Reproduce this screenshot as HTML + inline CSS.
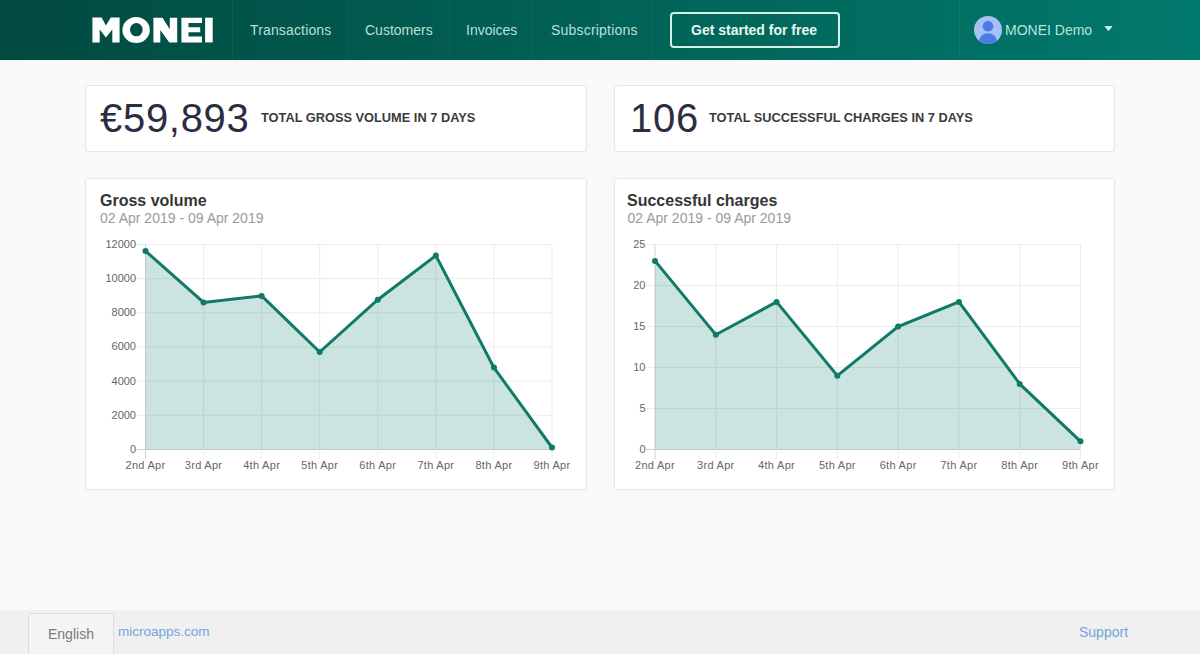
<!DOCTYPE html>
<html><head><meta charset="utf-8">
<style>
*{box-sizing:border-box;margin:0;padding:0}
html,body{width:1200px;height:654px;overflow:hidden;background:#f9f9f9;font-family:"Liberation Sans",sans-serif;position:relative}
.a{position:absolute;white-space:nowrap;line-height:1}
#nav{position:absolute;left:0;top:0;width:1200px;height:60px;background:linear-gradient(90deg,#024a40 0%,#01796c 100%)}
.sep{position:absolute;top:0;width:1px;height:60px;background:rgba(255,255,255,0.05)}
.nl{font-size:14px;color:rgba(215,245,237,0.88)}
.card{position:absolute;background:#fff;border:1px solid #e6e6e6;border-radius:3px}
.stat{font-size:40px;color:#2b2d42;letter-spacing:0.7px}
.slbl{font-size:12.8px;font-weight:bold;color:#3b3b3b}
.ttl{font-size:16px;font-weight:bold;color:#353535}
.sub{font-size:14px;color:#9a9a9a}
#foot{position:absolute;left:0;top:610px;width:1200px;height:44px;background:#f0f0f0}
</style></head><body>
<div id="nav">
  <svg class="a" style="left:0;top:0" width="230" height="60" viewBox="0 0 230 60"><g fill="#fff">
    <path d="M92.4 17.5H101.6L105.9 25.4L110.8 17.5H119.6V42.4H112.3V29.4L105.9 37.6L99.7 29.4V42.4H92.4Z"/>
    <path fill-rule="evenodd" d="M122.4 30A13.7 13.1 0 1 0 149.8 30A13.7 13.1 0 1 0 122.4 30ZM130 29.7A6.35 6.65 0 1 0 142.7 29.7A6.35 6.65 0 1 0 130 29.7Z"/>
    <path d="M153.4 17.7H162.5L169.8 29.2V17.7H177.2V42.4H169.3L160.3 29.9V42.4H153.4Z"/>
    <path d="M181.4 17.7H202V23H188.5V27.2H200.2V32.3H188.5V36.5H202V42.4H181.4Z"/>
    <path d="M205.1 17.7H212.7V42.4H205.1Z"/>
  </g></svg>
  <div class="sep" style="left:232px"></div>
  <div class="sep" style="left:348px"></div>
  <div class="sep" style="left:449px"></div>
  <div class="sep" style="left:532px"></div>
  <div class="sep" style="left:652px"></div>
  <div class="sep" style="left:959px"></div>
  <div class="a nl" style="left:250px;top:22.7px;letter-spacing:0.15px">Transactions</div>
  <div class="a nl" style="left:365px;top:22.7px">Customers</div>
  <div class="a nl" style="left:466px;top:22.7px">Invoices</div>
  <div class="a nl" style="left:551px;top:22.7px;letter-spacing:0.2px">Subscriptions</div>
  <div class="a" style="left:670px;top:12px;width:170px;height:36px;border:2px solid #d6efe9;border-radius:4px"></div>
  <div class="a" style="left:691px;top:22.9px;font-size:14px;font-weight:bold;color:#e6f7f2">Get started for free</div>
  <svg class="a" style="left:974px;top:16px" width="28" height="28" viewBox="0 0 28 28">
    <defs><clipPath id="cc"><circle cx="14" cy="14" r="14"/></clipPath></defs>
    <circle cx="14" cy="14" r="14" fill="#a6c2f5"/>
    <circle cx="14" cy="10.2" r="5.4" fill="#4b7be3"/>
    <ellipse cx="14" cy="25.5" rx="9" ry="8.2" fill="#4b7be3" clip-path="url(#cc)"/>
  </svg>
  <div class="a nl" style="left:1005px;top:23px">MONEI Demo</div>
  <svg class="a" style="left:1104px;top:26px" width="9" height="6" viewBox="0 0 9 6"><path d="M1 0.5H8L4.5 4.8Z" fill="#d0f2ec" stroke="#d0f2ec" stroke-width="0.8" stroke-linejoin="round"/></svg>
</div>

<div class="card" style="left:85px;top:85px;width:502px;height:67px"></div>
<div class="a stat" style="left:100px;top:97.8px">€59,893</div>
<div class="a slbl" style="left:261px;top:111.6px">TOTAL GROSS VOLUME IN 7 DAYS</div>

<div class="card" style="left:614px;top:85px;width:501px;height:67px"></div>
<div class="a stat" style="left:630px;top:98px">106</div>
<div class="a slbl" style="left:709px;top:111.6px">TOTAL SUCCESSFUL CHARGES IN 7 DAYS</div>

<div class="card" style="left:85px;top:178px;width:502px;height:312px"></div>
<div class="a ttl" style="left:100px;top:192.5px">Gross volume</div>
<div class="a sub" style="left:100px;top:211px">02 Apr 2019 - 09 Apr 2019</div>

<div class="card" style="left:614px;top:178px;width:501px;height:312px"></div>
<div class="a ttl" style="left:627px;top:192.5px">Successful charges</div>
<div class="a sub" style="left:627.5px;top:211px">02 Apr 2019 - 09 Apr 2019</div>

<!--CHARTS-->
<svg class="a" style="left:0;top:0" width="1200" height="654" viewBox="0 0 1200 654" font-family="Liberation Sans" font-size="11" fill="#666">
<g shape-rendering="auto">
<line x1="136.00" y1="449.50" x2="552.00" y2="449.50" stroke="#d2d2d2" stroke-width="1"/>
<line x1="136.00" y1="415.33" x2="552.00" y2="415.33" stroke="#ececec" stroke-width="1"/>
<line x1="136.00" y1="381.17" x2="552.00" y2="381.17" stroke="#ececec" stroke-width="1"/>
<line x1="136.00" y1="347.00" x2="552.00" y2="347.00" stroke="#ececec" stroke-width="1"/>
<line x1="136.00" y1="312.83" x2="552.00" y2="312.83" stroke="#ececec" stroke-width="1"/>
<line x1="136.00" y1="278.67" x2="552.00" y2="278.67" stroke="#ececec" stroke-width="1"/>
<line x1="136.00" y1="244.50" x2="552.00" y2="244.50" stroke="#ececec" stroke-width="1"/>
<line x1="145.50" y1="244.50" x2="145.50" y2="459.00" stroke="#d2d2d2" stroke-width="1"/>
<line x1="203.57" y1="244.50" x2="203.57" y2="459.00" stroke="#ececec" stroke-width="1"/>
<line x1="261.64" y1="244.50" x2="261.64" y2="459.00" stroke="#ececec" stroke-width="1"/>
<line x1="319.71" y1="244.50" x2="319.71" y2="459.00" stroke="#ececec" stroke-width="1"/>
<line x1="377.79" y1="244.50" x2="377.79" y2="459.00" stroke="#ececec" stroke-width="1"/>
<line x1="435.86" y1="244.50" x2="435.86" y2="459.00" stroke="#ececec" stroke-width="1"/>
<line x1="493.93" y1="244.50" x2="493.93" y2="459.00" stroke="#ececec" stroke-width="1"/>
<line x1="552.00" y1="244.50" x2="552.00" y2="459.00" stroke="#ececec" stroke-width="1"/>
<polygon points="145.50,449.50 145.50,251.00 203.57,302.40 261.64,295.90 319.71,352.00 377.79,299.70 435.86,255.60 493.93,367.60 552.00,447.50 552.00,449.50" fill="rgba(0,118,100,0.2)"/>
<polyline points="145.50,251.00 203.57,302.40 261.64,295.90 319.71,352.00 377.79,299.70 435.86,255.60 493.93,367.60 552.00,447.50" fill="none" stroke="#0f7a68" stroke-width="3" stroke-linejoin="miter"/>
<circle cx="145.50" cy="251.00" r="3" fill="#0f7a68"/>
<circle cx="203.57" cy="302.40" r="3" fill="#0f7a68"/>
<circle cx="261.64" cy="295.90" r="3" fill="#0f7a68"/>
<circle cx="319.71" cy="352.00" r="3" fill="#0f7a68"/>
<circle cx="377.79" cy="299.70" r="3" fill="#0f7a68"/>
<circle cx="435.86" cy="255.60" r="3" fill="#0f7a68"/>
<circle cx="493.93" cy="367.60" r="3" fill="#0f7a68"/>
<circle cx="552.00" cy="447.50" r="3" fill="#0f7a68"/>
<text x="136.00" y="452.90" text-anchor="end">0</text>
<text x="136.00" y="418.73" text-anchor="end">2000</text>
<text x="136.00" y="384.57" text-anchor="end">4000</text>
<text x="136.00" y="350.40" text-anchor="end">6000</text>
<text x="136.00" y="316.23" text-anchor="end">8000</text>
<text x="136.00" y="282.07" text-anchor="end">10000</text>
<text x="136.00" y="247.90" text-anchor="end">12000</text>
<text x="145.50" y="468.7" text-anchor="middle" letter-spacing="0.3">2nd Apr</text>
<text x="203.57" y="468.7" text-anchor="middle" letter-spacing="0.3">3rd Apr</text>
<text x="261.64" y="468.7" text-anchor="middle" letter-spacing="0.3">4th Apr</text>
<text x="319.71" y="468.7" text-anchor="middle" letter-spacing="0.3">5th Apr</text>
<text x="377.79" y="468.7" text-anchor="middle" letter-spacing="0.3">6th Apr</text>
<text x="435.86" y="468.7" text-anchor="middle" letter-spacing="0.3">7th Apr</text>
<text x="493.93" y="468.7" text-anchor="middle" letter-spacing="0.3">8th Apr</text>
<text x="552.00" y="468.7" text-anchor="middle" letter-spacing="0.3">9th Apr</text>
<line x1="645.50" y1="449.50" x2="1080.50" y2="449.50" stroke="#d2d2d2" stroke-width="1"/>
<line x1="645.50" y1="408.50" x2="1080.50" y2="408.50" stroke="#ececec" stroke-width="1"/>
<line x1="645.50" y1="367.50" x2="1080.50" y2="367.50" stroke="#ececec" stroke-width="1"/>
<line x1="645.50" y1="326.50" x2="1080.50" y2="326.50" stroke="#ececec" stroke-width="1"/>
<line x1="645.50" y1="285.50" x2="1080.50" y2="285.50" stroke="#ececec" stroke-width="1"/>
<line x1="645.50" y1="244.50" x2="1080.50" y2="244.50" stroke="#ececec" stroke-width="1"/>
<line x1="655.00" y1="244.50" x2="655.00" y2="459.00" stroke="#d2d2d2" stroke-width="1"/>
<line x1="715.79" y1="244.50" x2="715.79" y2="459.00" stroke="#ececec" stroke-width="1"/>
<line x1="776.57" y1="244.50" x2="776.57" y2="459.00" stroke="#ececec" stroke-width="1"/>
<line x1="837.36" y1="244.50" x2="837.36" y2="459.00" stroke="#ececec" stroke-width="1"/>
<line x1="898.14" y1="244.50" x2="898.14" y2="459.00" stroke="#ececec" stroke-width="1"/>
<line x1="958.93" y1="244.50" x2="958.93" y2="459.00" stroke="#ececec" stroke-width="1"/>
<line x1="1019.71" y1="244.50" x2="1019.71" y2="459.00" stroke="#ececec" stroke-width="1"/>
<line x1="1080.50" y1="244.50" x2="1080.50" y2="459.00" stroke="#ececec" stroke-width="1"/>
<polygon points="655.00,449.50 655.00,260.90 715.79,334.70 776.57,301.90 837.36,375.70 898.14,326.50 958.93,301.90 1019.71,383.90 1080.50,441.30 1080.50,449.50" fill="rgba(0,118,100,0.2)"/>
<polyline points="655.00,260.90 715.79,334.70 776.57,301.90 837.36,375.70 898.14,326.50 958.93,301.90 1019.71,383.90 1080.50,441.30" fill="none" stroke="#0f7a68" stroke-width="3" stroke-linejoin="miter"/>
<circle cx="655.00" cy="260.90" r="3" fill="#0f7a68"/>
<circle cx="715.79" cy="334.70" r="3" fill="#0f7a68"/>
<circle cx="776.57" cy="301.90" r="3" fill="#0f7a68"/>
<circle cx="837.36" cy="375.70" r="3" fill="#0f7a68"/>
<circle cx="898.14" cy="326.50" r="3" fill="#0f7a68"/>
<circle cx="958.93" cy="301.90" r="3" fill="#0f7a68"/>
<circle cx="1019.71" cy="383.90" r="3" fill="#0f7a68"/>
<circle cx="1080.50" cy="441.30" r="3" fill="#0f7a68"/>
<text x="645.50" y="452.90" text-anchor="end">0</text>
<text x="645.50" y="411.90" text-anchor="end">5</text>
<text x="645.50" y="370.90" text-anchor="end">10</text>
<text x="645.50" y="329.90" text-anchor="end">15</text>
<text x="645.50" y="288.90" text-anchor="end">20</text>
<text x="645.50" y="247.90" text-anchor="end">25</text>
<text x="655.00" y="468.7" text-anchor="middle" letter-spacing="0.3">2nd Apr</text>
<text x="715.79" y="468.7" text-anchor="middle" letter-spacing="0.3">3rd Apr</text>
<text x="776.57" y="468.7" text-anchor="middle" letter-spacing="0.3">4th Apr</text>
<text x="837.36" y="468.7" text-anchor="middle" letter-spacing="0.3">5th Apr</text>
<text x="898.14" y="468.7" text-anchor="middle" letter-spacing="0.3">6th Apr</text>
<text x="958.93" y="468.7" text-anchor="middle" letter-spacing="0.3">7th Apr</text>
<text x="1019.71" y="468.7" text-anchor="middle" letter-spacing="0.3">8th Apr</text>
<text x="1080.50" y="468.7" text-anchor="middle" letter-spacing="0.3">9th Apr</text>
</g></svg>
<!--/CHARTS-->

<div id="foot"></div>
<div class="a" style="left:62px;top:626.5px;font-size:14px;color:#ebebeb">© 2019</div>
<div class="a" style="left:28px;top:613px;width:86px;height:50px;background:#f4f4f4;border:1px solid #dcdcdc;border-radius:3px"></div>
<div class="a" style="left:48px;top:627.3px;font-size:14px;color:#7a7a7a">English</div>
<div class="a" style="left:118px;top:624.5px;font-size:13.5px;color:#74a4dc">microapps.com</div>
<div class="a" style="left:1079px;top:624.6px;font-size:14px;color:#74a4dc">Support</div>
</body></html>
